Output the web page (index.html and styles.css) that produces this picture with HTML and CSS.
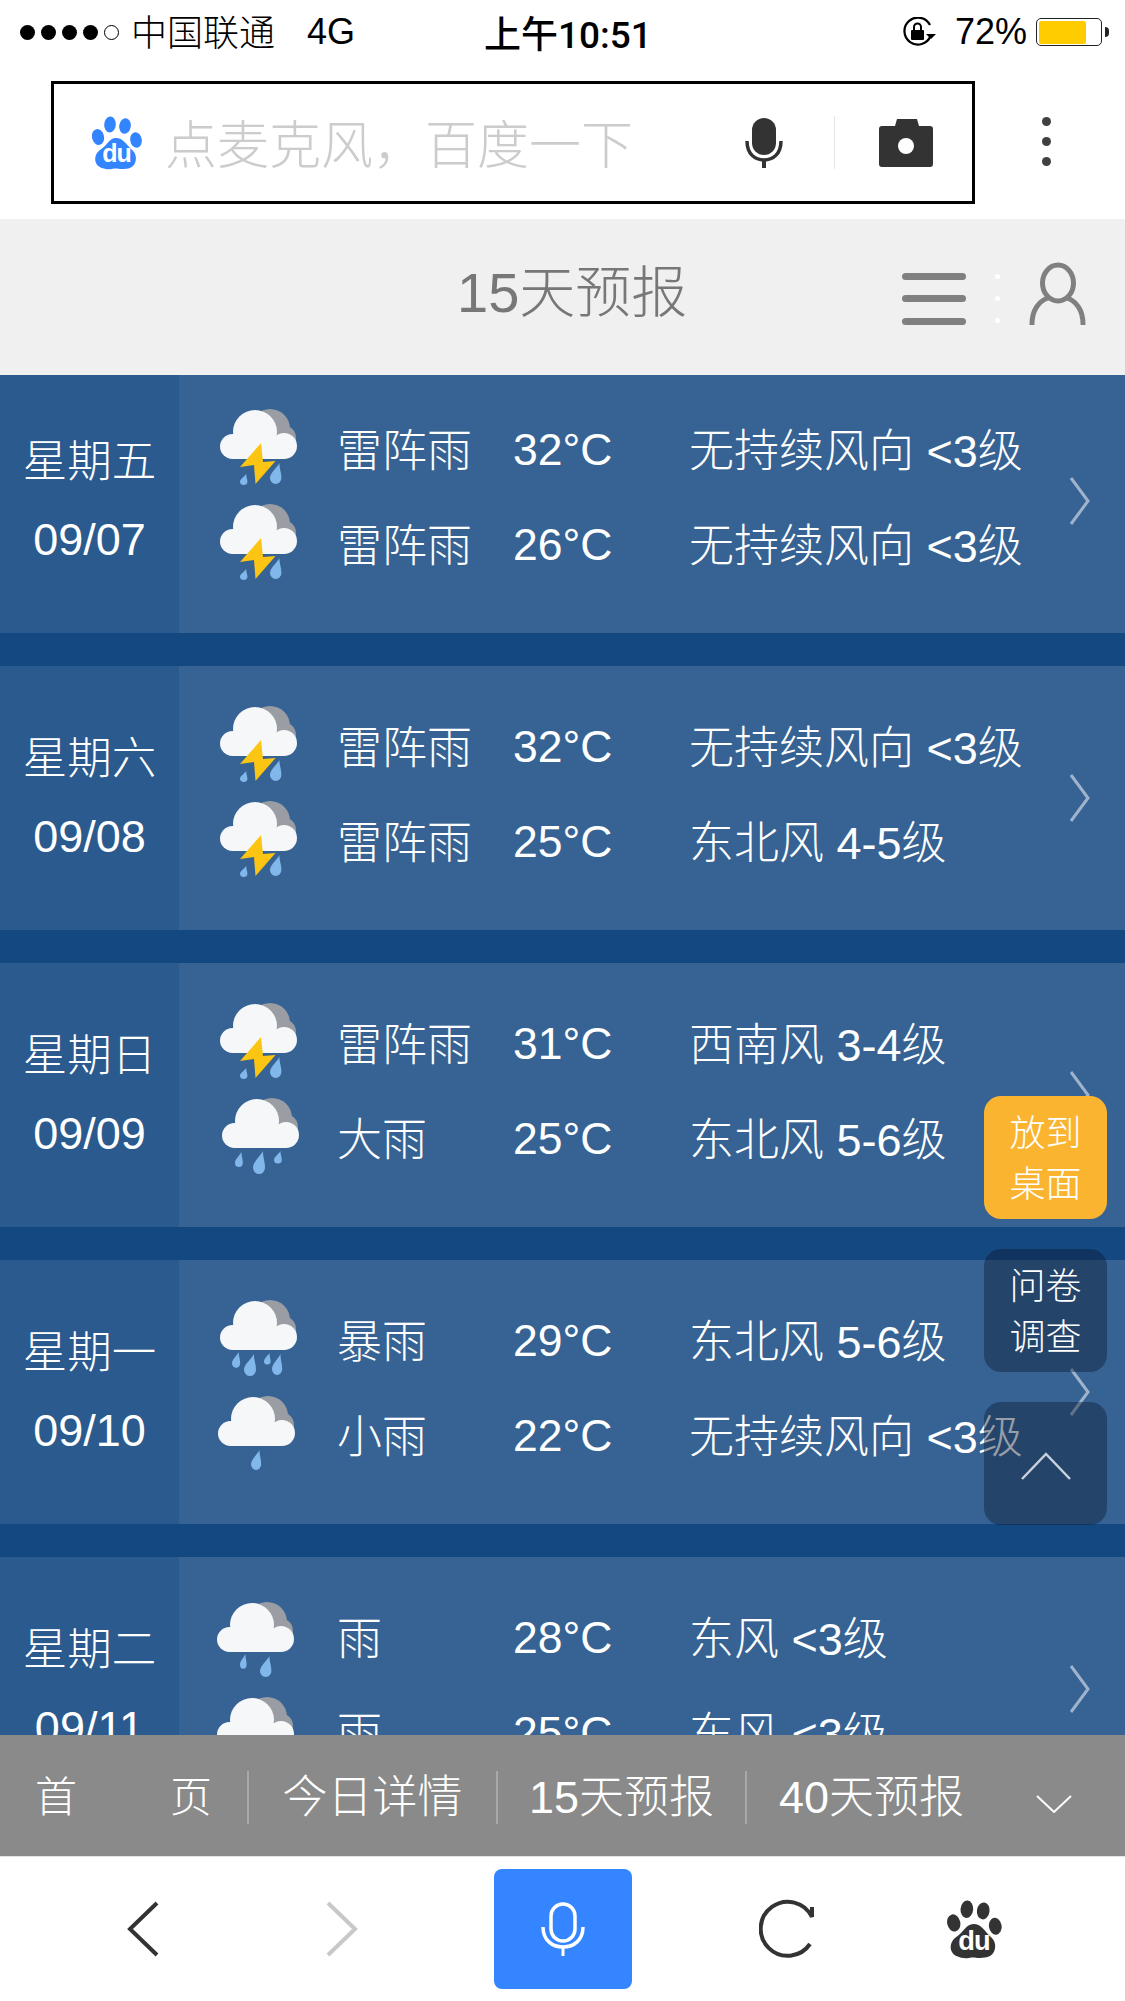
FILE: index.html
```html
<!DOCTYPE html>
<html lang="zh-CN">
<head>
    <meta charset="UTF-8">
    <meta name="viewport" content="width=device-width, initial-scale=1.0">
    <title>15天预报</title>
    <link rel="stylesheet" href="styles.css">
</head>
<body>

<!-- shared icons -->
<svg class="sprite" xmlns="http://www.w3.org/2000/svg">
    <defs>
        <g id="cloud">
            <circle cx="50" cy="20" r="20" fill="#9a9da3"/>
            <circle cx="63" cy="29" r="13" fill="#9a9da3"/>
            <circle cx="12.5" cy="37.5" r="12.5" fill="#f6f7f9"/>
            <circle cx="35" cy="23" r="22" fill="#f6f7f9"/>
            <circle cx="64" cy="37" r="13" fill="#f6f7f9"/>
            <rect x="12" y="28" width="52" height="22" fill="#f6f7f9"/>
        </g>
        <path id="drop" d="M10 0C9.6 5 12 9 12 15A6 6 0 0 1 0 15C0 10 7 5 10 0Z" fill="#82b7ec"/>
    </defs>
    <symbol id="i-thunder" viewBox="0 0 90 90">
        <g transform="translate(5 4)">
            <use href="#cloud"/>
            <use href="#drop" transform="translate(20 65) scale(.62 .52)"/>
            <use href="#drop" transform="translate(50 54) scale(.95 1)"/>
            <path d="M41 34L20 58L34 56L35.500 75L55.500 52L43 53Z" fill="#fdc513"/>
        </g>
    </symbol>
    <symbol id="i-heavy" viewBox="0 0 90 90">
        <g transform="translate(7 4)">
            <use href="#cloud"/>
            <use href="#drop" transform="translate(13 54) scale(.65 .72)"/>
            <use href="#drop" transform="translate(31 53) scale(1 1.1)"/>
            <use href="#drop" transform="translate(52 53) scale(.65 .6)"/>
        </g>
    </symbol>
    <symbol id="i-storm" viewBox="0 0 90 90">
        <g transform="translate(5 4)">
            <use href="#cloud"/>
            <use href="#drop" transform="translate(12 52) scale(.68 .75)"/>
            <use href="#drop" transform="translate(24 54) scale(1 1.05)"/>
            <use href="#drop" transform="translate(44 53) scale(.55 .55)"/>
            <use href="#drop" transform="translate(52 54) scale(.85 1)"/>
        </g>
    </symbol>
    <symbol id="i-light" viewBox="0 0 90 90">
        <g transform="translate(3 5)">
            <use href="#cloud"/>
            <use href="#drop" transform="translate(33 54) scale(.85 .95)"/>
        </g>
    </symbol>
    <symbol id="i-rain" viewBox="0 0 90 90">
        <g transform="translate(2 9)">
            <use href="#cloud"/>
            <use href="#drop" transform="translate(23 52) scale(.55 .7)"/>
            <use href="#drop" transform="translate(43 54) scale(.95 1)"/>
        </g>
    </symbol>
    <symbol id="i-paw" viewBox="0 0 50 54">
        <ellipse cx="6" cy="21" rx="6" ry="8" transform="rotate(-12 6 21)" fill="currentColor"/>
        <ellipse cx="18" cy="8.500" rx="5.800" ry="8" transform="rotate(5 18 8.500)" fill="currentColor"/>
        <ellipse cx="33" cy="10" rx="5.800" ry="7.800" transform="rotate(8 33 10)" fill="currentColor"/>
        <ellipse cx="44" cy="24" rx="5.800" ry="7.800" transform="rotate(-8 44 24)" fill="currentColor"/>
        <path d="M24 22C31 22 34 28 39 33C44 37 45 42 43 47C41 52 36 53 30 53C26 53 24 52 20 53C14 54 6 52 4 47C2 42 4 37 8 34C15 30 17 22 24 22Z" fill="currentColor"/>
        <text x="24.500" y="46" class="paw-text">du</text>
    </symbol>
</svg>

<div class="page">
    <!-- status bar -->
    <div class="status">
        <div class="signal">
            <span class="dot"></span><span class="dot"></span><span class="dot"></span><span class="dot"></span><span class="dot empty"></span>
        </div>
        <span class="carrier">中国联通</span>
        <span class="net">4G</span>
        <span class="clock">上午10:51</span>
        <svg class="lock" viewBox="0 0 34 30" width="34" height="30">
            <path d="M28.500 19A13.500 13.500 0 1 1 28 8" fill="none" stroke="#000" stroke-width="2.200"/>
            <path d="M24 17H34L29 22Z" fill="#000"/>
            <rect x="9" y="13" width="13" height="10" rx="1" fill="#000"/>
            <path d="M12 13V10a3.500 3.500 0 0 1 7 0V13" fill="none" stroke="#000" stroke-width="2"/>
        </svg>
        <span class="percent">72%</span>
        <div class="battery"><div class="battery-fill"></div></div>
        <div class="battery-nub"></div>
    </div>

    <!-- search -->
    <div class="search-row">
        <div class="search-box">
            <svg class="baidu-logo"><use href="#i-paw"/></svg>
            <span class="placeholder">点麦克风，百度一下</span>
            <svg class="mic" viewBox="0 0 38 51" width="38" height="51">
                <rect x="7" y="1" width="24" height="37" rx="12" fill="#333"/>
                <path d="M2 24C2 37 10 43 19 43C28 43 36 37 36 24" fill="none" stroke="#333" stroke-width="3.500"/>
                <rect x="17" y="42" width="4" height="9" fill="#333"/>
            </svg>
            <div class="search-sep"></div>
            <svg class="camera" viewBox="0 0 54 48" width="54" height="48">
                <path d="M16 7L18 0H38L40 7H51a3 3 0 0 1 3 3V45a3 3 0 0 1-3 3H3a3 3 0 0 1-3-3V10a3 3 0 0 1 3-3Z" fill="#333"/>
                <circle cx="27" cy="27" r="8" fill="#fff"/>
            </svg>
        </div>
        <div class="more"><span></span><span></span><span></span></div>
    </div>

    <!-- page title -->
    <div class="title-bar">
        <h1>15天预报</h1>
        <div class="menu"><span></span><span></span><span></span></div>
        <div class="menu-dots"><span></span><span></span><span></span></div>
        <svg class="user" viewBox="0 0 57 63" width="57" height="63">
            <ellipse cx="29" cy="21" rx="15.500" ry="18" fill="none" stroke="#808080" stroke-width="5"/>
            <path d="M3 62C3 48 10 39 19 36M54 62C54 48 47 39 38 36" fill="none" stroke="#808080" stroke-width="5" stroke-linecap="round"/>
        </svg>
    </div>

    <!-- forecast list -->
    <div class="forecast">
        <div class="forecast-list">
            <div class="day">
                <div class="date"><span>星期五</span><span class="num">09/07</span></div>
                <div class="lines">
                    <div class="line"><svg class="wx"><use href="#i-thunder"/></svg><span class="cond">雷阵雨</span><span class="temp">32°C</span><span class="wind">无持续风向 &lt;3级</span></div>
                    <div class="line"><svg class="wx"><use href="#i-thunder"/></svg><span class="cond">雷阵雨</span><span class="temp">26°C</span><span class="wind">无持续风向 &lt;3级</span></div>
                </div>
                <svg class="arrow" viewBox="0 0 21 48" width="21" height="48"><path d="M2 1L19 24L2 47" /></svg>
            </div>
            <div class="day">
                <div class="date"><span>星期六</span><span class="num">09/08</span></div>
                <div class="lines">
                    <div class="line"><svg class="wx"><use href="#i-thunder"/></svg><span class="cond">雷阵雨</span><span class="temp">32°C</span><span class="wind">无持续风向 &lt;3级</span></div>
                    <div class="line"><svg class="wx"><use href="#i-thunder"/></svg><span class="cond">雷阵雨</span><span class="temp">25°C</span><span class="wind">东北风 4-5级</span></div>
                </div>
                <svg class="arrow" viewBox="0 0 21 48" width="21" height="48"><path d="M2 1L19 24L2 47" /></svg>
            </div>
            <div class="day">
                <div class="date"><span>星期日</span><span class="num">09/09</span></div>
                <div class="lines">
                    <div class="line"><svg class="wx"><use href="#i-thunder"/></svg><span class="cond">雷阵雨</span><span class="temp">31°C</span><span class="wind">西南风 3-4级</span></div>
                    <div class="line"><svg class="wx"><use href="#i-heavy"/></svg><span class="cond">大雨</span><span class="temp">25°C</span><span class="wind">东北风 5-6级</span></div>
                </div>
                <svg class="arrow" viewBox="0 0 21 48" width="21" height="48"><path d="M2 1L19 24L2 47" /></svg>
            </div>
            <div class="day">
                <div class="date"><span>星期一</span><span class="num">09/10</span></div>
                <div class="lines">
                    <div class="line"><svg class="wx"><use href="#i-storm"/></svg><span class="cond">暴雨</span><span class="temp">29°C</span><span class="wind">东北风 5-6级</span></div>
                    <div class="line"><svg class="wx"><use href="#i-light"/></svg><span class="cond">小雨</span><span class="temp">22°C</span><span class="wind">无持续风向 &lt;3级</span></div>
                </div>
                <svg class="arrow" viewBox="0 0 21 48" width="21" height="48"><path d="M2 1L19 24L2 47" /></svg>
            </div>
            <div class="day">
                <div class="date"><span>星期二</span><span class="num">09/11</span></div>
                <div class="lines">
                    <div class="line"><svg class="wx"><use href="#i-rain"/></svg><span class="cond">雨</span><span class="temp">28°C</span><span class="wind">东风 &lt;3级</span></div>
                    <div class="line"><svg class="wx"><use href="#i-rain"/></svg><span class="cond">雨</span><span class="temp">25°C</span><span class="wind">东风 &lt;3级</span></div>
                </div>
                <svg class="arrow" viewBox="0 0 21 48" width="21" height="48"><path d="M2 1L19 24L2 47" /></svg>
            </div>
        </div>
    </div>

    <!-- floating buttons -->
    <div class="float-btns">
        <div class="float-btn yellow">放到<br>桌面</div>
        <div class="float-btn">问卷<br>调查</div>
        <div class="float-btn">
            <svg viewBox="0 0 50 28" width="50" height="28"><path d="M1 27L25 2L49 27" fill="none" stroke="#c9d2dc" stroke-width="2.500"/></svg>
        </div>
    </div>

    <!-- tabs -->
    <div class="tabs">
        <div class="tab tab-home"><span>首</span><span>页</span></div>
        <div class="tab">今日详情</div>
        <div class="tab">15天预报</div>
        <div class="tab tab-last">40天预报</div>
        <svg class="tab-more" viewBox="0 0 36 18" width="36" height="18"><path d="M1 1L18 17L35 1" fill="none" stroke="#fff" stroke-width="2"/></svg>
    </div>

    <!-- browser toolbar -->
    <div class="toolbar">
        <svg class="back" viewBox="0 0 32 56" width="32" height="56"><path d="M30 2L3 28L30 54" fill="none" stroke="#333" stroke-width="4"/></svg>
        <svg class="forward" viewBox="0 0 32 56" width="32" height="56"><path d="M2 2L29 28L2 54" fill="none" stroke="#c8c8c8" stroke-width="4"/></svg>
        <div class="voice">
            <svg viewBox="0 0 44 54" width="44" height="54">
                <rect x="10" y="2" width="24" height="37" rx="12" fill="none" stroke="#fff" stroke-width="3.500"/>
                <path d="M2 25C2 38 11 45 22 45C33 45 42 38 42 25" fill="none" stroke="#fff" stroke-width="3.500"/>
                <rect x="20.500" y="44" width="3" height="10" fill="#fff"/>
            </svg>
        </div>
        <svg class="reload" viewBox="0 0 58 60" width="58" height="60"><path d="M51 45A27 27 0 1 1 53 18V8" fill="none" stroke="#333" stroke-width="4"/></svg>
        <svg class="home-paw"><use href="#i-paw"/></svg>
    </div>
</div>

</body>
</html>
```

FILE: styles.css
```css
* { box-sizing: border-box; }
html, body { margin: 0; padding: 0; }
body { width: 1125px; height: 2001px; overflow: hidden; background: #fff; font-family: "Liberation Sans", "Noto Sans CJK SC", sans-serif; }
.sprite { position: absolute; width: 0; height: 0; }
.paw-text { font-family: "Liberation Sans", sans-serif; font-size: 25px; font-weight: bold; fill: #fff; text-anchor: middle; letter-spacing: -1px; }
.page { position: relative; width: 1125px; height: 2001px; display: flex; flex-direction: column; }

/* status bar */
.status { height: 64px; display: flex; align-items: center; font-size: 36px; color: #000; padding-left: 20px; flex: none; }
.signal { display: flex; gap: 6px; width: 111px; }
.dot { width: 15px; height: 15px; border-radius: 50%; background: #000; }
.dot.empty { background: none; border: 1px solid #000; }
.carrier { width: 176px; font-weight: 300; margin-bottom: 4px; }
.net { width: 177px; font-weight: 300; }
.clock { width: 418px; font-family: Roboto, "Noto Sans CJK SC", sans-serif; font-weight: 500; font-size: 37px; }
.lock { flex: none; margin-right: 19px; }
.percent { width: 81px; font-weight: 300; }
.battery { width: 66px; height: 28px; border: 1.500px solid #222; border-radius: 5px; padding: 1.500px; }
.battery-fill { width: 47px; height: 100%; background: #fc0; border-radius: 2px; }
.battery-nub { width: 4px; height: 10px; margin-left: 3px; background: #222; border-radius: 0 5px 5px 0; }

/* search */
.search-row { height: 155px; flex: none; padding: 17px 0 0 51px; display: flex; align-items: flex-start; }
.search-box { width: 924px; height: 123px; border: 3px solid #000; display: flex; align-items: center; padding-left: 38px; }
.baidu-logo { width: 50px; height: 54px; color: #3385ff; flex: none; }
.placeholder { width: 580px; margin-left: 23px; font-size: 52px; font-weight: 300; color: #ccc; white-space: nowrap; margin-bottom: 3px; }
.mic { flex: none; }
.search-sep { width: 1px; height: 53px; background: #e5e5e5; margin-left: 51px; }
.camera { flex: none; margin-left: 44px; }
.more { display: flex; flex-direction: column; gap: 11px; margin: 36px 0 0 67px; }
.more span { width: 9px; height: 9px; border-radius: 50%; background: #404040; }

/* title */
.title-bar { height: 156px; flex: none; background: #f0f0f0; display: flex; align-items: center; position: relative; padding-left: 902px; }
.title-bar h1 { position: absolute; left: 457px; top: 0; margin: 0; line-height: 148px; font-size: 56px; font-weight: 300; color: #777; }
.menu { width: 64px; display: flex; flex-direction: column; gap: 15.500px; margin-top: 3px; }
.menu span { height: 7px; border-radius: 3.500px; background: #808080; }
.menu-dots { display: flex; flex-direction: column; gap: 17px; margin: 3px 0 0 29px; }
.menu-dots span { width: 5px; height: 5px; border-radius: 50%; background: #fff; }
.user { margin: -7px 0 0 29px; flex: none; }

/* forecast rows */
.forecast { flex: 1; overflow: hidden; background: #144880; }
.forecast-list { margin-top: -6px; }
.day { height: 264px; margin-bottom: 33px; display: flex; align-items: center; background: #366393; color: #fff; }
.date { width: 179px; height: 100%; flex: none; background: #2b5a8e; display: flex; flex-direction: column; justify-content: center; align-items: center; font-size: 44.500px; font-weight: 300; line-height: 78px; }
.date .num { font-size: 45px; }
.lines { flex: 1; height: 100%; padding-top: 34px; }
.line { height: 94.500px; display: flex; align-items: center; font-size: 45px; font-weight: 300; white-space: nowrap; }
.wx { width: 90px; height: 90px; margin: 0 32px 0 36px; flex: none; }
.cond { width: 176px; margin-bottom: 5px; }
.temp { width: 176px; font-size: 44.500px; }
.wind { margin-bottom: 5px; }
.arrow { flex: none; margin-right: 35px; }
.arrow path { fill: none; stroke: #9fb3cc; stroke-width: 3; }

/* floating buttons */
.float-btns { position: absolute; top: 1096px; right: 18px; display: flex; flex-direction: column; gap: 30px; }
.float-btn { width: 123px; height: 123px; border-radius: 17px; background: rgba(12, 26, 49, 0.42); color: #fff; font-size: 36px; font-weight: 300; line-height: 51px; text-align: center; display: flex; align-items: center; justify-content: center; padding-top: 2px; }
.float-btn.yellow { background: #fbb430; }
.float-btn svg { margin-top: 3px; }

/* tabs */
.tabs { height: 122px; flex: none; background: #8a8a8a; display: flex; align-items: center; color: #fff; font-size: 45px; font-weight: 300; border-bottom: 1px solid #e4e4e4; }
.tab { width: 249px; height: 53px; line-height: 53px; text-align: center; border-right: 2px solid #a9a9a9; margin-top: 4px; white-space: nowrap; }
.tab-home { display: flex; justify-content: space-between; padding: 0 35px; font-size: 42px; }
.tab-last { border-right: none; }
.tab-more { flex: none; margin: 16px 0 0 40px; }

/* toolbar */
.toolbar { height: 144px; flex: none; display: flex; align-items: center; padding-left: 127px; }
.forward { margin-left: 167px; flex: none; }
.back { flex: none; }
.voice { width: 138px; height: 120px; margin: 0 0 0 136px; background: #3485ff; border-radius: 8px; display: flex; align-items: center; justify-content: center; }
.reload { margin-left: 127px; flex: none; }
.home-paw { width: 55px; height: 59px; margin-left: 130px; color: #333; flex: none; }
```
